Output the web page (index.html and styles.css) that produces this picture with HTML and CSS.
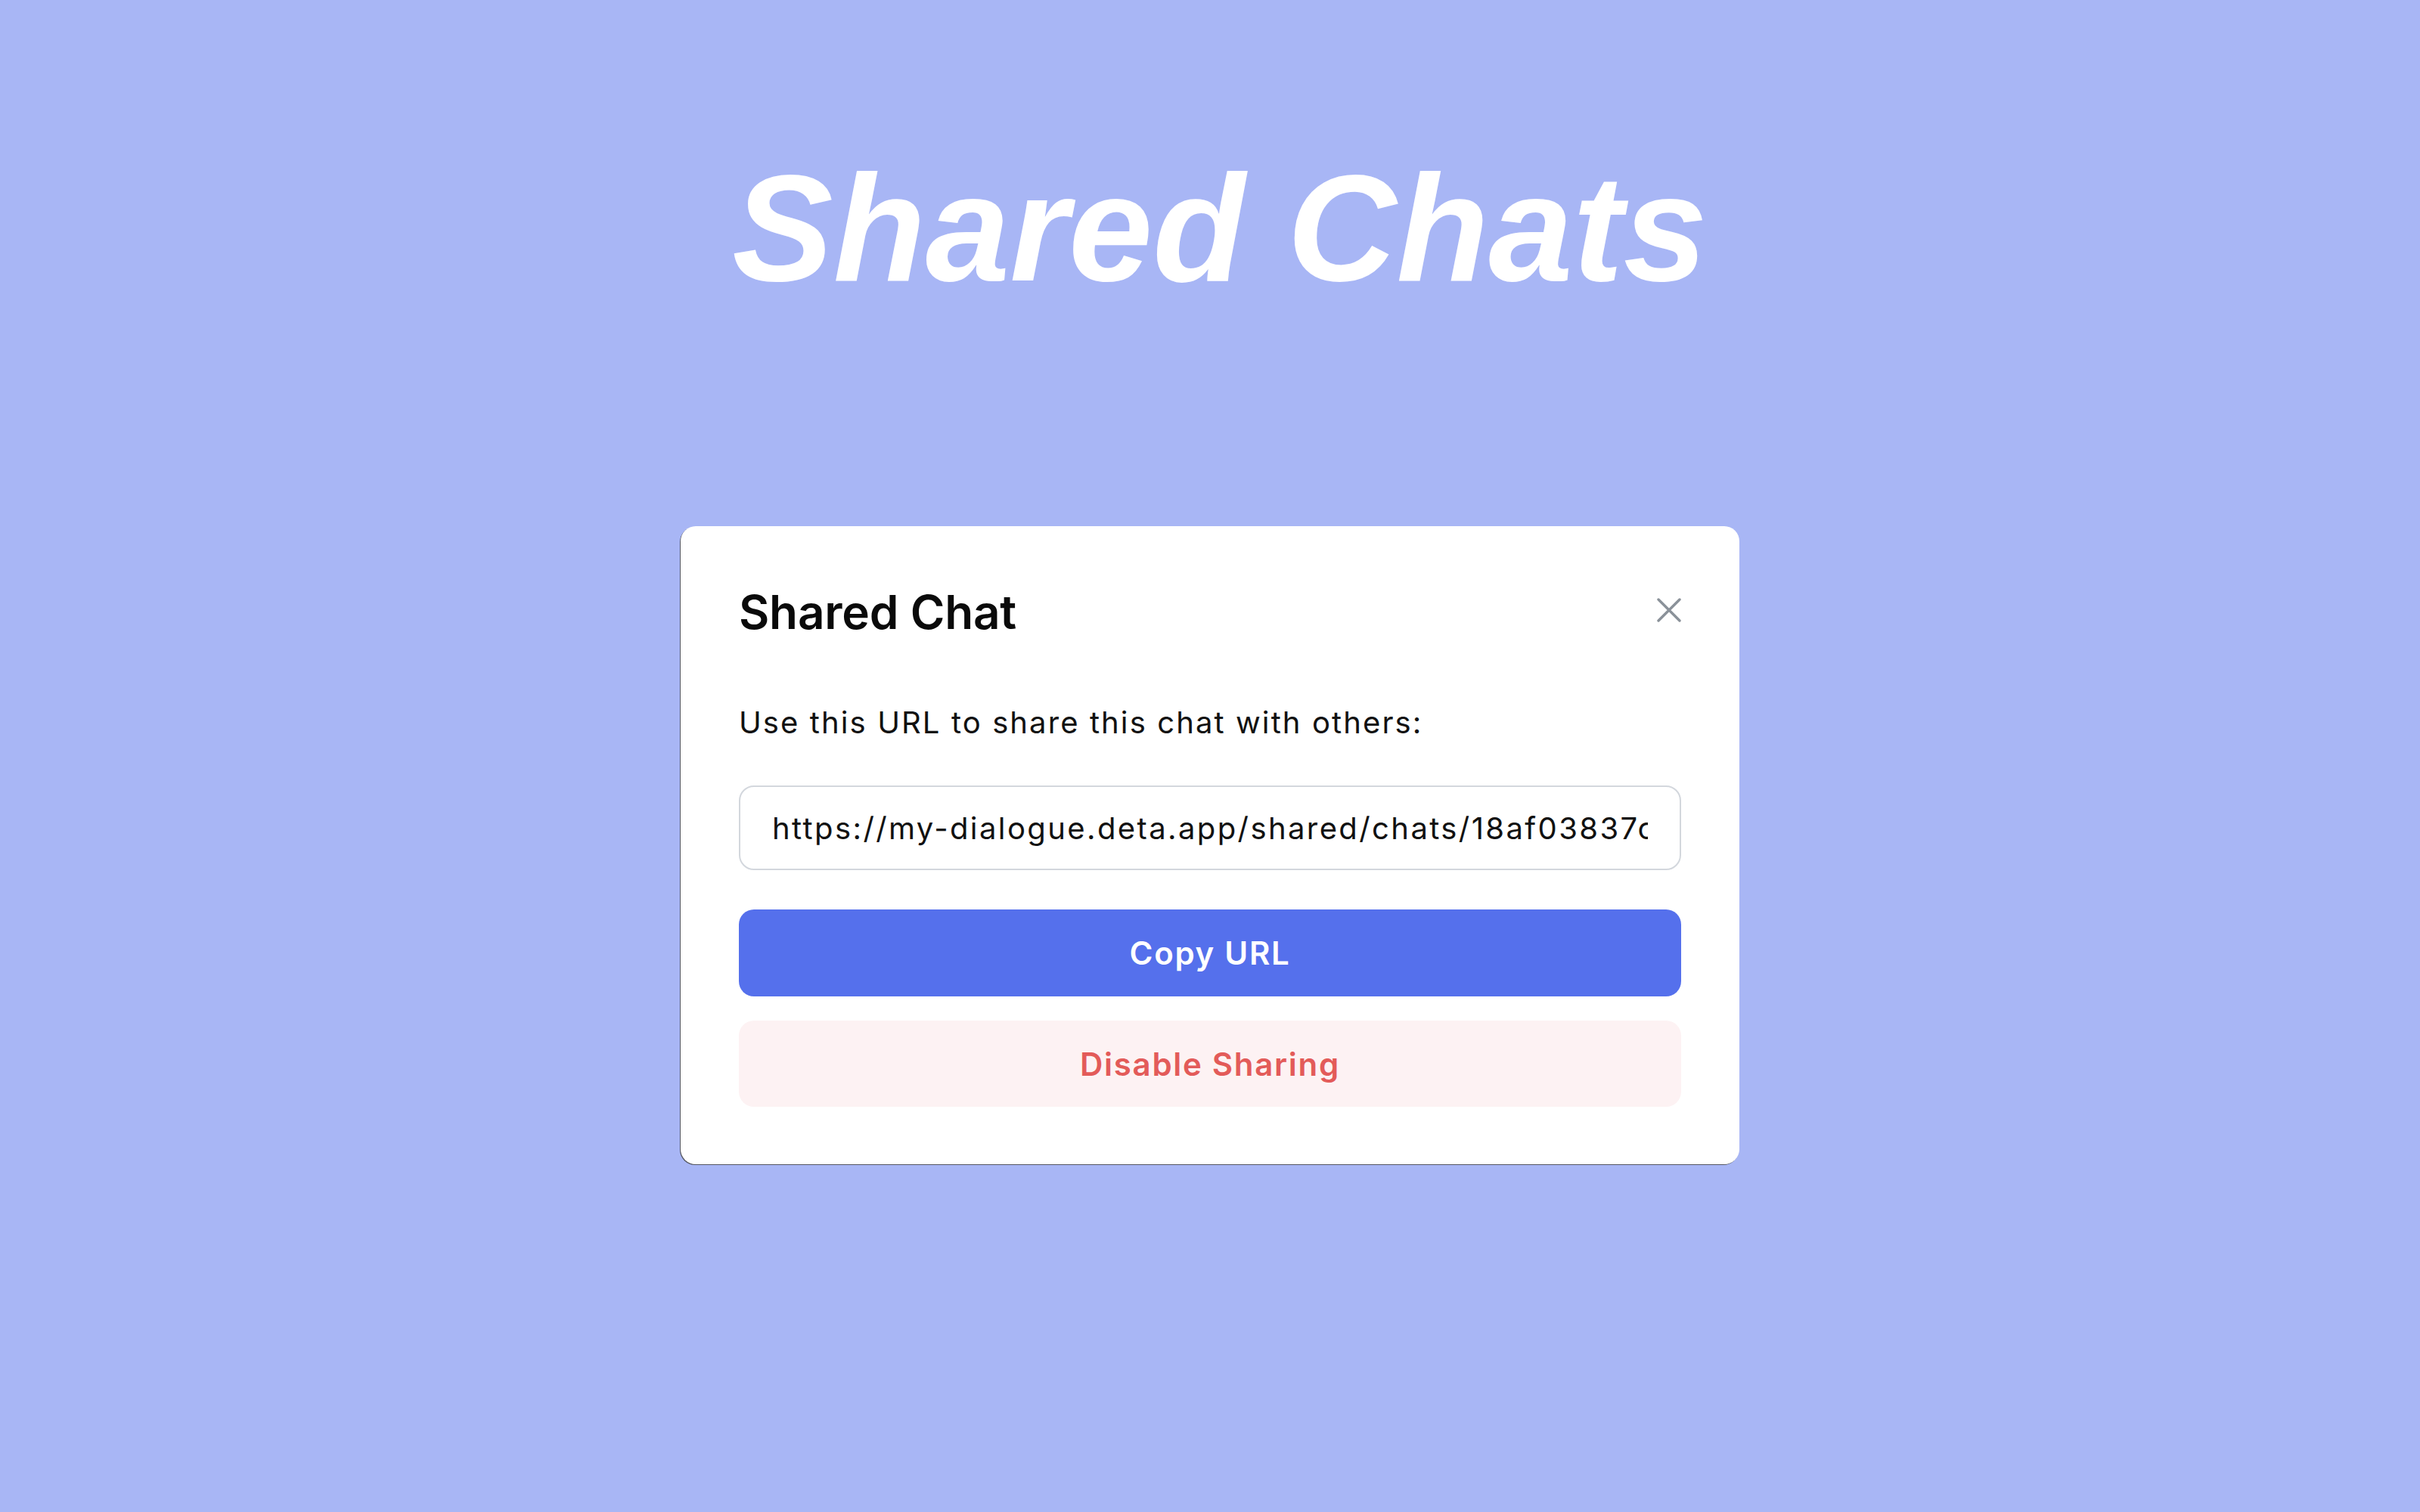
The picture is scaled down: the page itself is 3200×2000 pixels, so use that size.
FILE: index.html
```html
<!DOCTYPE html>
<html lang="en">
<head>
<meta charset="utf-8">
<title>Shared Chats</title>
<link rel="stylesheet" href="styles.css">
</head>
<body>
<main class="page">
  <h1 class="hero">Shared Chats</h1>
  <section class="modal">
    <div class="modal-head">
      <h2 class="modal-title">Shared Chat</h2>
      <button class="close" aria-label="Close">
        <svg viewBox="0 0 32 32" width="32" height="32"><path d="M2 2 L30 30 M30 2 L2 30" stroke="#8a9199" stroke-width="3.4" stroke-linecap="round" fill="none"/></svg>
      </button>
    </div>
    <p class="desc">Use this URL to share this chat with others:</p>
    <input class="url" type="text" readonly value="https://my-dialogue.deta.app/shared/chats/18af03837c1a4b2e9f">
    <button class="btn btn-primary">Copy URL</button>
    <button class="btn btn-danger">Disable Sharing</button>
  </section>
</main>
</body>
</html>
```

FILE: styles.css
```css
html, body {
  margin: 0;
  padding: 0;
}
body {
  background: #a8b6f5;
  min-height: 2000px;
  font-family: Inter, "Noto Sans", sans-serif;
}
.page {
  display: flex;
  flex-direction: column;
  align-items: center;
  padding-top: 190px;
}
.hero {
  margin: 0;
  padding-left: 26px;
  font-family: "Liberation Sans", Arial, sans-serif;
  font-weight: 700;
  font-style: italic;
  font-size: 200px;
  line-height: 223px;
  color: #ffffff;
}
.modal {
  margin-top: 283px;
  width: 1400px;
  box-sizing: border-box;
  padding: 76px 77px 76px 77px;
  background: #ffffff;
  border-radius: 20px;
  box-shadow: -1px 1px 0 rgba(70, 70, 70, 0.85);
  display: flex;
  flex-direction: column;
}
.modal-head {
  display: flex;
  justify-content: space-between;
  align-items: center;
  height: 75px;
}
.modal-title {
  margin: 0;
  font-size: 62px;
  line-height: 75px;
  font-weight: 600;
  color: #0a0a0a;
  letter-spacing: -0.2px;
}
.close {
  border: 0;
  background: none;
  padding: 0;
  width: 32px;
  height: 32px;
  margin-bottom: 5px;
  display: flex;
}
.desc {
  margin: 85px 0 0 0;
  font-size: 40px;
  line-height: 48px;
  color: #111111;
  letter-spacing: 2.1px;
}
.url {
  margin-top: 59px;
  height: 112px;
  box-sizing: border-box;
  border: 2px solid #d3d7dd;
  border-radius: 20px;
  padding: 0 42px;
  font-family: Inter, "Noto Sans", sans-serif;
  font-size: 40px;
  letter-spacing: 2.4px;
  color: #111111;
  background: #ffffff;
  outline: none;
  width: 100%;
}
.btn {
  border: 0;
  border-radius: 20px;
  font-family: Inter, "Noto Sans", sans-serif;
  font-size: 42px;
  font-weight: 600;
  letter-spacing: 1.7px;
  width: 100%;
  padding: 0;
}
.btn-primary {
  margin-top: 52px;
  height: 115px;
  background: #5570ec;
  color: #ffffff;
}
.btn-danger {
  margin-top: 32px;
  height: 114px;
  background: #fdf2f3;
  color: #e35b59;
}
```
